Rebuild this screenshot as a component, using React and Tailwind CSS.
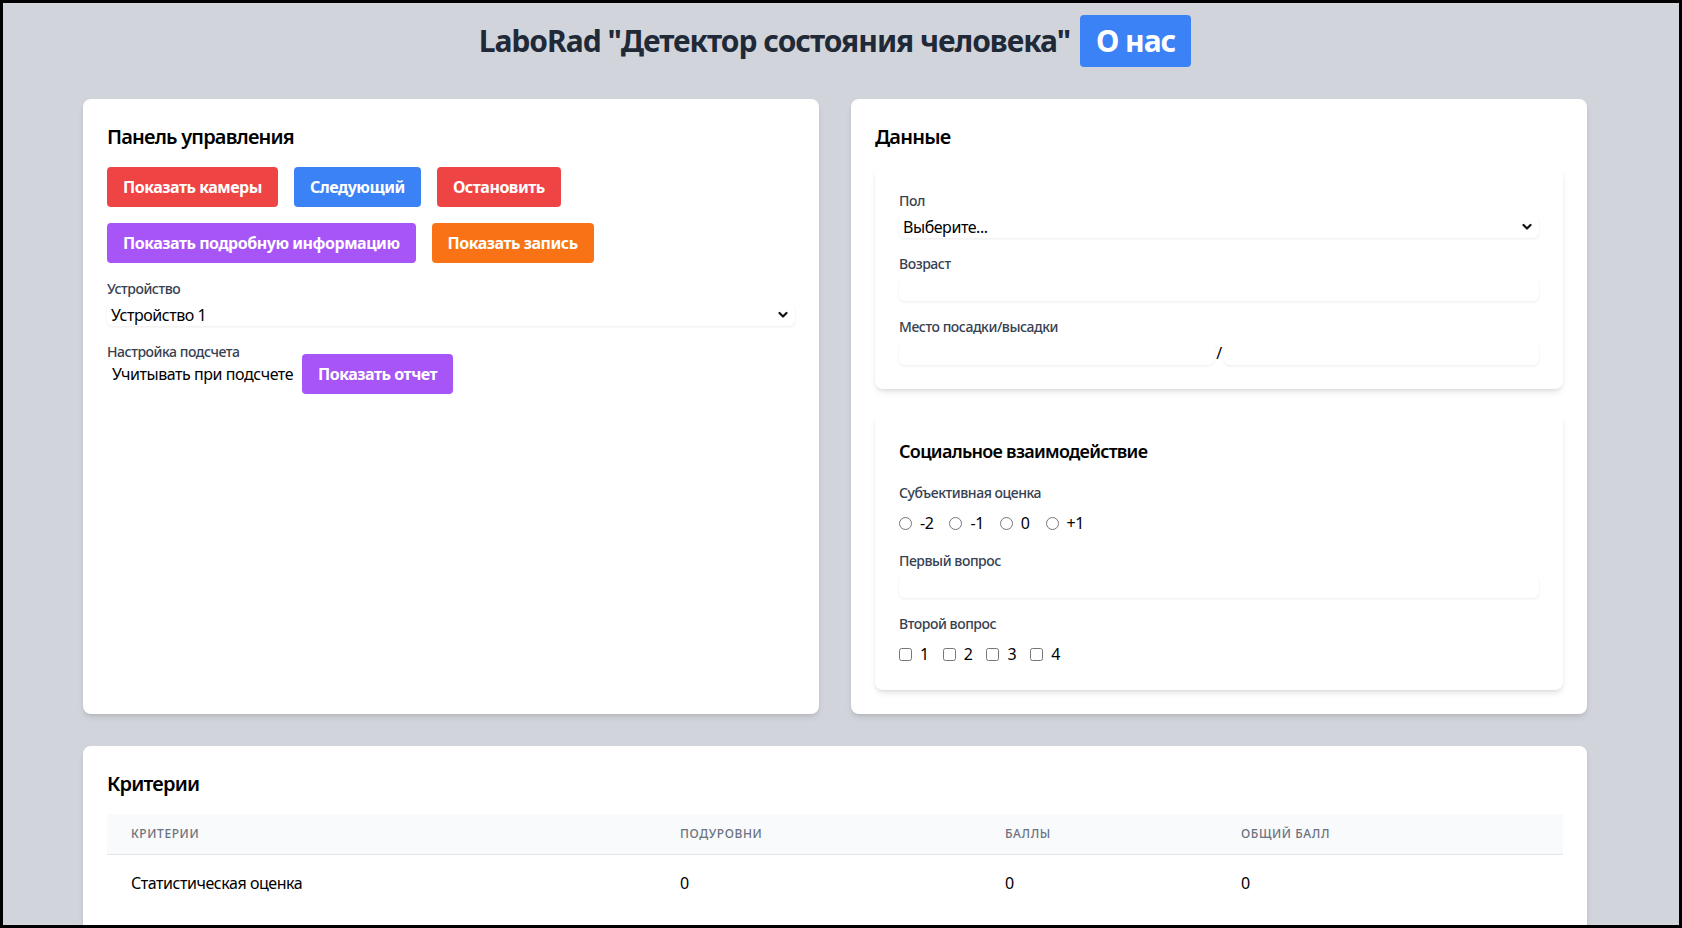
const Chevron = () => (
  <svg width="12" height="12" viewBox="0 0 12 12" className="shrink-0">
    <path d="M2.5 4 L6 7.5 L9.5 4" fill="none" stroke="#111" strokeWidth="2.2" strokeLinecap="round" strokeLinejoin="round" />
  </svg>
)

const Field = ({ children, className = '' }) => (
  <div className={`flex h-[23px] items-center rounded-md bg-white shadow-[0_1px_3px_rgba(0,0,0,0.08)] ${className}`}>
    {children}
  </div>
)

const SelectBox = ({ value }) => (
  <Field className="justify-between pl-1 pr-1.5">
    <span className="text-base leading-6 text-black">{value}</span>
    <Chevron />
  </Field>
)

const Label = ({ children, className = '' }) => (
  <p className={`text-sm font-medium leading-5 text-[#374151] ${className}`}>{children}</p>
)

const Btn = ({ color, children }) => (
  <button className={`h-10 rounded px-4 text-base font-bold tracking-[-0.03em] text-white ${color}`}>{children}</button>
)

const columns = [
  { name: 'Критерии', width: 'w-[549px]' },
  { name: 'Подуровни', width: 'w-[325px]' },
  { name: 'Баллы', width: 'w-[236px]' },
  { name: 'Общий балл', width: '' },
]

export default function App() {
  return (
    <div className="h-screen overflow-hidden border-[3px] border-black bg-[#d1d5db] font-['Noto_Sans',sans-serif] tracking-[-0.028em]">
      <div className="pl-[80px] pr-[92px]">
        <header className="mt-3 mb-8 flex items-center justify-center gap-[10px]">
          <h1 className="text-3xl font-bold tracking-[-0.034em] text-[#1f2937]">LaboRad "Детектор состояния человека"</h1>
          <button className="rounded bg-[#3b82f6] px-4 py-2 text-3xl font-bold tracking-[-0.034em] text-white">О нас</button>
        </header>

        <div className="grid grid-cols-2 gap-8">
          <section className="rounded-lg bg-white p-6 shadow-md">
            <h2 className="mb-4 text-xl font-semibold tracking-[-0.04em] text-black">Панель управления</h2>
            <div className="flex flex-wrap gap-4">
              <Btn color="bg-[#ef4444]">Показать камеры</Btn>
              <Btn color="bg-[#3b82f6]">Следующий</Btn>
              <Btn color="bg-[#ef4444]">Остановить</Btn>
              <Btn color="bg-[#a855f7]">Показать подробную информацию</Btn>
              <Btn color="bg-[#f97316]">Показать запись</Btn>
            </div>
            <Label className="mt-4 mb-1">Устройство</Label>
            <SelectBox value="Устройство 1" />
            <Label className="mt-4">Настройка подсчета</Label>
            <div className="-mt-2 flex items-center gap-[9px]">
              <span className="ml-[5px] text-base text-black">Учитывать при подсчете</span>
              <Btn color="bg-[#a855f7]">Показать отчет</Btn>
            </div>
          </section>

          <section className="rounded-lg bg-white p-6 shadow-md">
            <h2 className="mb-4 text-xl font-semibold tracking-[-0.04em] text-black">Данные</h2>
            <div className="rounded-lg bg-white p-6 shadow-md">
              <Label className="mb-1">Пол</Label>
              <SelectBox value="Выберите..." />
              <Label className="mt-4 mb-1">Возраст</Label>
              <Field />
              <Label className="mt-4 mb-1">Место посадки/высадки</Label>
              <div className="flex items-center gap-[2px]">
                <Field className="flex-1" />
                <span className="text-base leading-6 text-black">/</span>
                <Field className="flex-1" />
              </div>
            </div>

            <div className="mt-6 rounded-lg bg-white p-6 shadow-md">
              <h3 className="mb-[18px] text-lg font-semibold tracking-[-0.04em] text-black">Социальное взаимодействие</h3>
              <Label>Субъективная оценка</Label>
              <div className="mt-2 flex items-center gap-4">
                {['-2', '-1', '0', '+1'].map((v) => (
                  <label key={v} className="flex items-center gap-2 text-base leading-6 text-black">
                    <input type="radio" name="score" className="m-0 h-[13px] w-[13px]" />
                    {v}
                  </label>
                ))}
              </div>
              <Label className="mt-4 mb-1">Первый вопрос</Label>
              <Field />
              <Label className="mt-4">Второй вопрос</Label>
              <div className="mt-2 flex items-center gap-[14px]">
                {['1', '2', '3', '4'].map((v) => (
                  <label key={v} className="flex items-center gap-2 text-base leading-6 text-black">
                    <input type="checkbox" className="m-0 h-[13px] w-[13px]" />
                    {v}
                  </label>
                ))}
              </div>
            </div>
          </section>
        </div>

        <section className="mt-8 rounded-lg bg-white p-6 shadow-md">
          <h2 className="mb-4 text-xl font-semibold tracking-[-0.04em] text-black">Критерии</h2>
          <table className="w-full table-fixed">
            <thead className="border-b border-[#e5e7eb] bg-[#f9fafb]">
              <tr>
                {columns.map((c) => (
                  <th key={c.name} className={`px-6 py-3 text-left text-xs font-medium uppercase tracking-wider text-[#6b7280] ${c.width}`}>
                    {c.name}
                  </th>
                ))}
              </tr>
            </thead>
            <tbody>
              <tr>
                <td className="px-6 py-4 text-base text-black">Статистическая оценка</td>
                <td className="px-6 py-4 text-base text-black">0</td>
                <td className="px-6 py-4 text-base text-black">0</td>
                <td className="px-6 py-4 text-base text-black">0</td>
              </tr>
            </tbody>
          </table>
        </section>
      </div>
    </div>
  )
}
